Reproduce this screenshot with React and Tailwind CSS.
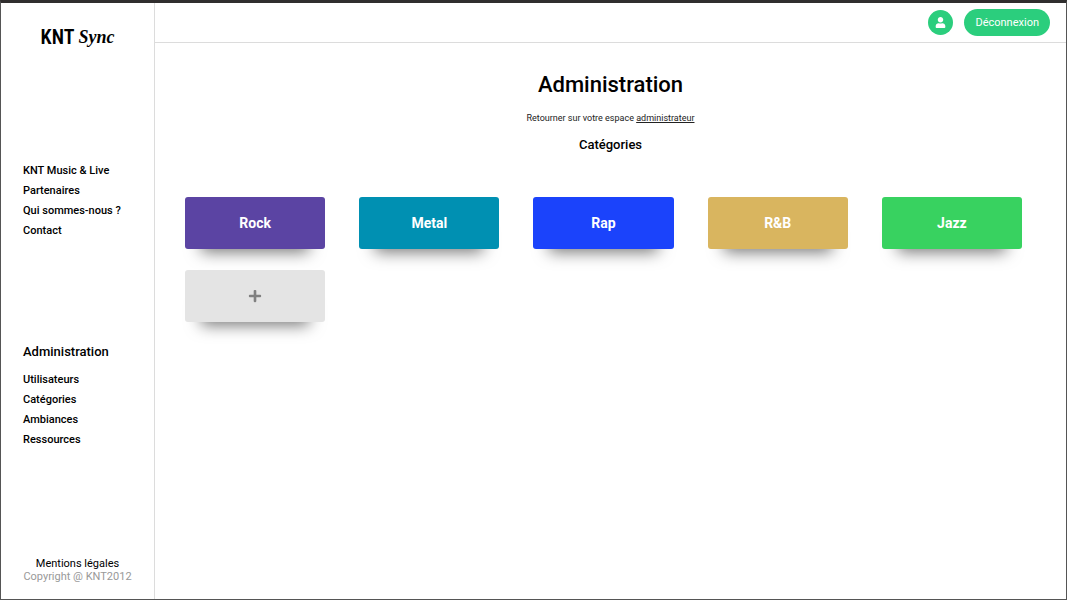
import { FaPlus, FaUser } from "react-icons/fa";

const siteLinks = ["KNT Music & Live", "Partenaires", "Qui sommes-nous ?", "Contact"];
const adminLinks = ["Utilisateurs", "Catégories", "Ambiances", "Ressources"];
const categories = [
  { name: "Rock", color: "bg-[#5b44a3]" },
  { name: "Metal", color: "bg-[#0090b2]" },
  { name: "Rap", color: "bg-[#1b43fb]" },
  { name: "R&B", color: "bg-[#d9b55f]" },
  { name: "Jazz", color: "bg-[#38d260]" },
];

const cardClass =
  "flex h-[52px] items-center justify-center rounded-[3px] shadow-[0_19px_16px_-16px_rgba(0,0,0,0.55)]";

function LinkList({ items }) {
  return (
    <ul className="flex flex-col">
      {items.map((item) => (
        <li key={item} className="h-5 text-[11px] leading-5 font-medium">
          <a href="#">{item}</a>
        </li>
      ))}
    </ul>
  );
}

export default function App() {
  return (
    <div className="flex min-h-screen border border-t-3 border-[#555] border-t-[#302e2e] bg-white font-['Roboto',sans-serif] text-black">
      <aside className="flex w-[154px] shrink-0 flex-col border-r border-[#dcdcdc] pb-4">
        <a href="#" className="flex h-[68px] items-center justify-center gap-1 leading-none">
          <span className="font-['Roboto_Condensed','Liberation_Sans_Narrow','Roboto',sans-serif] text-xl font-semibold">KNT</span>
          <span className="font-['Liberation_Serif',serif] text-lg font-bold italic">Sync</span>
        </a>
        <nav className="mt-[90px] pl-[22px]">
          <LinkList items={siteLinks} />
        </nav>
        <nav className="mt-[101px] pl-[22px]">
          <h2 className="mb-2 text-[13px] leading-5 font-medium">Administration</h2>
          <LinkList items={adminLinks} />
        </nav>
        <footer className="mt-auto text-center text-[11px] leading-[13px]">
          <a href="#" className="block">Mentions légales</a>
          <p className="text-[#999]">Copyright @ KNT2012</p>
        </footer>
      </aside>
      <div className="flex min-w-0 flex-1 flex-col">
        <header className="flex h-10 items-center justify-end gap-[11px] border-b border-[#dcdcdc] pr-4">
          <button aria-label="Profil" className="flex size-[25px] items-center justify-center rounded-full bg-[#2bce7d] text-white">
            <FaUser className="size-[11px]" />
          </button>
          <button className="h-[27px] rounded-full bg-[#2bce7d] px-[11px] text-[11px] leading-4 text-white">Déconnexion</button>
        </header>
        <main className="flex flex-col pt-[26px] pr-11 pl-[30px]">
          <div className="mr-[-14px] flex flex-col items-center">
            <h1 className="text-[22px] leading-8 font-medium">Administration</h1>
            <p className="mt-2.5 text-[9px] leading-[14px] text-[#222]">
              Retourner sur votre espace <a href="#" className="underline">administrateur</a>
            </p>
            <h2 className="mt-2.5 text-[13px] leading-5 font-medium">Catégories</h2>
          </div>
          <div className="mt-[42px] grid grid-cols-5 gap-x-[34px] gap-y-[21px]">
            {categories.map((category) => (
              <button key={category.name} className={`${cardClass} ${category.color} text-sm font-bold text-white`}>
                {category.name}
              </button>
            ))}
            <button aria-label="Ajouter une catégorie" className={`${cardClass} bg-[#e4e4e4] text-[#808080]`}>
              <FaPlus className="size-[14px]" />
            </button>
          </div>
        </main>
      </div>
    </div>
  );
}
